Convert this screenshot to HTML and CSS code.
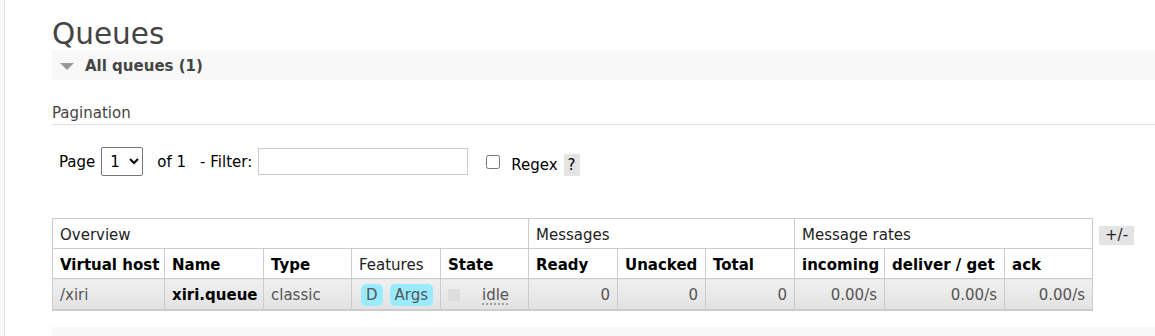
FILE: index.html
```html
<!DOCTYPE html>
<html lang="en">
  <head>
    <meta charset="UTF-8" />
    <title>RabbitMQ Management - Queues</title>
    <link rel="stylesheet" href="styles.css">
  </head>
  <body>
    <div class="layout">
      <div class="rail"></div>
      <div class="main">
        <h1>Queues</h1>

        <div class="section">
          <h2 class="section-title"><span class="tri"></span>All queues (1)</h2>
          <div class="hider">
            <h3 class="pagination-title">Pagination</h3>

            <div class="filter-row">
              <label class="page-label">Page</label>
              <select class="page-select">
                <option>1</option>
              </select>
              <span class="of-label">of 1</span>
              <label class="filter-label">- Filter:</label>
              <input type="text" class="filter-input" />
              <input type="checkbox" class="regex-check" />
              <label class="regex-label">Regex</label>
              <span class="help">?</span>
            </div>

            <div class="list-wrap">
              <table class="list">
                <colgroup>
                  <col class="c-vhost" />
                  <col class="c-name" />
                  <col class="c-type" />
                  <col class="c-features" />
                  <col class="c-state" />
                  <col class="c-ready" />
                  <col class="c-unacked" />
                  <col class="c-total" />
                  <col class="c-incoming" />
                  <col class="c-deliver" />
                  <col class="c-ack" />
                </colgroup>
                <thead>
                  <tr class="group-row">
                    <th colspan="5">Overview</th>
                    <th colspan="3">Messages</th>
                    <th colspan="3">Message rates</th>
                  </tr>
                  <tr class="col-row">
                    <th>Virtual host</th>
                    <th>Name</th>
                    <th>Type</th>
                    <th class="plain">Features</th>
                    <th>State</th>
                    <th>Ready</th>
                    <th>Unacked</th>
                    <th>Total</th>
                    <th>incoming</th>
                    <th>deliver / get</th>
                    <th>ack</th>
                  </tr>
                </thead>
                <tbody>
                  <tr>
                    <td>/xiri</td>
                    <td class="queue-name">xiri.queue</td>
                    <td>classic</td>
                    <td><span class="badge">D</span><span class="badge">Args</span></td>
                    <td><span class="state-box"></span><abbr class="state">idle</abbr></td>
                    <td class="num">0</td>
                    <td class="num">0</td>
                    <td class="num">0</td>
                    <td class="num">0.00/s</td>
                    <td class="num">0.00/s</td>
                    <td class="num">0.00/s</td>
                  </tr>
                </tbody>
              </table>
              <span class="toggle-cols">+/-</span>
            </div>
          </div>
        </div>

        <div class="section section-next"></div>
      </div>
    </div>
  </body>
</html>
```

FILE: styles.css
```css
body {
  margin: 0;
  font-family: "DejaVu Sans", Verdana, sans-serif;
  font-size: 15px;
  color: #000;
  background: #fff;
}
.layout {
  display: flex;
  min-height: 336px;
}
.rail {
  width: 4px;
  background: #f8f8f8;
  border-right: 1px solid #e4e4e4;
  flex-shrink: 0;
}
.main {
  flex: 1;
  padding-left: 47px;
}
h1 {
  margin: 0;
  padding-top: 17px;
  height: 33px;
  font-size: 29.5px;
  line-height: 34px;
  font-weight: normal;
  color: #444;
}
.section-title {
  margin: 0;
  height: 30px;
  box-sizing: border-box;
  padding-top: 2px;
  background: #f8f8f8;
  font-size: 15px;
  font-weight: bold;
  color: #444;
  display: flex;
  align-items: center;
}
.tri {
  width: 0;
  height: 0;
  margin: 0 11px 0 8px;
  border-left: 7px solid transparent;
  border-right: 7px solid transparent;
  border-top: 7px solid #999;
}
.pagination-title {
  margin: 24px 0 0;
  padding-bottom: 2px;
  font-size: 15px;
  line-height: 18px;
  font-weight: normal;
  color: #444;
  border-bottom: 1px solid #e0e0e0;
}
.filter-row {
  display: flex;
  align-items: center;
  height: 29px;
  margin-top: 22px;
  padding-left: 7px;
}
.page-label {
  margin-right: 6px;
}
.page-select {
  width: 42px;
  height: 29px;
  font-family: inherit;
  font-size: 15px;
  padding: 0 2px 0 4px;
  border: 1px solid #767676;
  border-radius: 2px;
  background: #fff;
}
.of-label {
  margin-left: 14px;
}
.filter-label {
  margin-left: 14px;
}
.filter-input {
  width: 210px;
  height: 27px;
  box-sizing: border-box;
  margin: 0 0 0 6px;
  border: 1px solid #ccc;
  padding: 2px 4px;
  font-family: inherit;
}
.regex-check {
  width: 14px;
  height: 14px;
  margin: 0 0 0 18px;
}
.regex-label {
  margin: 6px 0 0 11px;
}
.help {
  margin: 6px 0 0 6px;
  padding: 0 4px;
  height: 22px;
  line-height: 22px;
  background: #e4e4e4;
}
.list-wrap {
  display: flex;
  align-items: flex-start;
  margin-top: 42px;
}
.list {
  border-collapse: collapse;
  table-layout: fixed;
  width: 1040px;
}
.list th,
.list td {
  border: 1px solid #ccc;
  padding: 2px 7px 0;
  text-align: left;
  white-space: nowrap;
  font-size: 15px;
}
.list th {
  height: 27px;
  line-height: 18px;
}
.group-row th {
  font-weight: normal;
  color: #222;
}
.col-row th {
  font-weight: bold;
}
.col-row th.plain {
  font-weight: normal;
  color: #222;
}
.c-vhost { width: 112px; }
.c-name { width: 99px; }
.c-type { width: 88px; }
.c-features { width: 89px; }
.c-state { width: 88px; }
.c-ready { width: 89px; }
.c-unacked { width: 88px; }
.c-total { width: 89px; }
.c-incoming { width: 90px; }
.c-deliver { width: 120px; }
.c-ack { width: 88px; }
.list td {
  height: 28px;
  color: #555;
  background: linear-gradient(#f0f0f0, #e2e2e2);
  border-bottom: 2px solid #ccc;
}
.list td.num {
  text-align: right;
}
.list td.queue-name {
  font-weight: bold;
  color: #000;
}
.badge {
  display: inline-block;
  padding: 2px 5px;
  line-height: 18px;
  margin: 0 7px 0 2px;
  background: #99ebff;
  border-radius: 5px;
  color: #555;
}
.badge + .badge {
  margin: 0;
}
.state-box {
  display: inline-block;
  width: 12px;
  height: 12px;
  background: #ddd;
  vertical-align: -1px;
  margin-right: 22px;
}
.state {
  text-decoration: underline dotted #888;
  text-underline-offset: 4px;
}
.toggle-cols {
  margin: 8px 0 0 6px;
  padding: 0 6px;
  height: 19px;
  line-height: 19px;
  background: #e4e4e4;
  color: #222;
}
.section-next {
  margin-top: 16px;
  height: 20px;
  background: #f8f8f8;
}
```
